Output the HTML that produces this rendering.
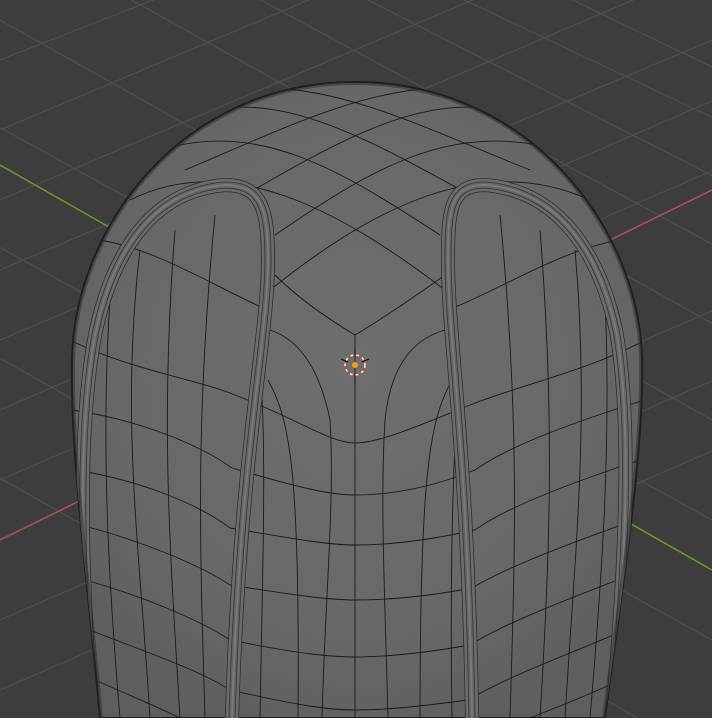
<!DOCTYPE html>
<html><head><style>html,body{margin:0;padding:0;background:#3d3d3d;width:712px;height:718px;overflow:hidden}svg{display:block}</style></head>
<body>
<svg width="712" height="718" viewBox="0 0 712 718" xmlns="http://www.w3.org/2000/svg">
<defs>
<clipPath id="obj"><path d="M100,718 C90,600 70,460 72,360 C74,230 180,82 355,82 C530,82 640,230 642,360 C644,460 620,600 605,718 Z"/></clipPath>
<radialGradient id="sh" cx="0.5" cy="0.45" r="0.6">
<stop offset="0" stop-color="#6e6e6e"/><stop offset="0.7" stop-color="#686868"/><stop offset="1" stop-color="#5e5e5e"/></radialGradient>
</defs>
<rect width="712" height="718" fill="#3d3d3d"/>
<g stroke="#4f4f4f" stroke-width="1.2">
<line x1="0" y1="20" x2="712" y2="420"/>
<line x1="60" y1="-40" x2="760" y2="350"/>
<line x1="150" y1="-60" x2="760" y2="270"/>
<line x1="270" y1="-50" x2="760" y2="200"/>
<line x1="380" y1="-40" x2="760" y2="140"/>
<line x1="510" y1="-30" x2="760" y2="90"/>
<line x1="-50" y1="100" x2="712" y2="520"/>
<line x1="-50" y1="220" x2="712" y2="640"/>
<line x1="-50" y1="330" x2="712" y2="760"/>
<line x1="-50" y1="450" x2="500" y2="760"/>
<line x1="0" y1="60" x2="230" y2="-30"/>
<line x1="0" y1="130" x2="380" y2="-30"/>
<line x1="0" y1="200" x2="520" y2="-20"/>
<line x1="0" y1="270" x2="680" y2="-20"/>
<line x1="0" y1="340" x2="760" y2="20"/>
<line x1="0" y1="410" x2="760" y2="80"/>
<line x1="0" y1="480" x2="760" y2="150"/>
<line x1="0" y1="620" x2="760" y2="290"/>
<line x1="0" y1="690" x2="760" y2="360"/>
<line x1="50" y1="740" x2="760" y2="430"/>
</g>
<line x1="0" y1="540" x2="712" y2="190" stroke="#b0505a" stroke-width="1.5"/>
<line x1="0" y1="165" x2="712" y2="570" stroke="#6f9a2a" stroke-width="1.5"/>
<path d="M100,718 C90,600 70,460 72,360 C74,230 180,82 355,82 C530,82 640,230 642,360 C644,460 620,600 605,718 Z" fill="url(#sh)" stroke="#1e1e1e" stroke-width="2"/>
<g clip-path="url(#obj)" fill="none">
<g stroke="#1a1a1a" stroke-width="0.9">
<path d="M130,200 C230,150 340,210 445,290"/>
<path d="M160,150 C260,120 340,170 440,235"/>
<path d="M210,110 C290,95 370,140 470,195"/>
<path d="M270,88 C350,90 430,130 530,170"/>
<path d="M590,200 C480,150 370,210 270,290"/>
<path d="M560,150 C450,120 370,170 275,235"/>
<path d="M500,110 C420,95 340,140 245,195"/>
<path d="M440,88 C360,90 280,130 185,170"/>
<path d="M275,275 C300,300 330,320 355,335 C380,320 410,300 445,275"/>
<path d="M355,335 L355,718"/>
<path d="M270,330 C300,340 320,370 330,420 C335,500 325,600 322,718"/>
<path d="M445,330 C410,340 390,370 385,420 C380,500 385,600 388,718"/>
<path d="M268,380 C290,420 300,470 298,718"/>
<path d="M452,380 C430,420 420,470 420,718"/>
<path d="M262,400 C266,470 262,600 260,718"/>
<path d="M458,400 C452,470 450,600 452,718"/>
<path d="M235,395 C300,420 330,443 355,443 C380,443 420,425 470,405"/>
<path d="M232,468 C300,488 330,495 355,495 C390,495 430,488 475,470"/>
<path d="M230,528 C300,540 330,545 355,545 C390,545 430,540 475,530"/>
<path d="M230,585 C300,596 330,600 355,600 C390,600 430,596 472,588"/>
<path d="M230,640 C300,654 330,657 355,657 C390,657 430,652 470,645"/>
<path d="M230,690 C300,706 330,710 355,710 C390,710 430,705 468,700"/>
<path d="M100,240 C160,250 220,290 268,310"/>
<path d="M70,340 C130,370 200,380 235,395"/>
<path d="M72,410 C140,420 200,445 232,468"/>
<path d="M75,470 C140,480 200,505 230,528"/>
<path d="M80,525 C140,540 200,565 230,585"/>
<path d="M85,580 C140,595 200,620 230,640"/>
<path d="M90,630 C140,650 200,670 230,690"/>
<path d="M95,680 C140,700 190,720 220,740"/>
<path d="M140,250 C120,420 140,550 150,718"/>
<path d="M175,230 C160,420 170,550 180,718"/>
<path d="M215,215 C195,420 200,550 205,718"/>
<path d="M110,300 C100,450 110,600 120,718"/>
<path d="M620,240 C560,250 500,290 448,310"/>
<path d="M645,340 C590,370 520,385 470,405"/>
<path d="M645,400 C580,420 510,445 475,470"/>
<path d="M640,460 C580,480 510,505 475,530"/>
<path d="M635,520 C580,540 510,565 472,588"/>
<path d="M630,575 C580,595 510,620 470,645"/>
<path d="M625,630 C580,650 510,675 468,700"/>
<path d="M620,680 C580,700 520,720 480,740"/>
<path d="M575,250 C590,420 575,550 565,718"/>
<path d="M540,230 C555,420 550,550 540,718"/>
<path d="M500,215 C520,420 515,550 510,718"/>
<path d="M605,300 C612,450 600,600 590,718"/>
</g>
<g>
<path id="gl" d="M92,718 C80,560 78,420 96,330 C116,240 160,190 225,185 C262,185 268,210 268,260 C268,340 240,450 232,718"/>
<path id="gr" d="M612,718 C626,560 632,420 616,330 C596,240 550,190 485,185 C450,185 448,210 448,260 C448,340 468,450 472,718"/>
</g>
<use href="#gl" stroke="#2a2a2a" stroke-width="14"/>
<use href="#gl" stroke="#6c6c6c" stroke-width="12.5"/>
<use href="#gl" stroke="#333" stroke-width="7"/>
<use href="#gl" stroke="#646464" stroke-width="5.5"/>
<use href="#gl" stroke="#7a7a7a" stroke-width="2"/>
<use href="#gr" stroke="#2a2a2a" stroke-width="14"/>
<use href="#gr" stroke="#6c6c6c" stroke-width="12.5"/>
<use href="#gr" stroke="#333" stroke-width="7"/>
<use href="#gr" stroke="#646464" stroke-width="5.5"/>
<use href="#gr" stroke="#7a7a7a" stroke-width="2"/>
<path d="M100,718 C90,600 70,460 72,360 C74,230 180,82 355,82 C530,82 640,230 642,360 C644,460 620,600 605,718" stroke="#2a2a2a" stroke-width="6" opacity="0.5"/>
</g>
<circle cx="355" cy="365" r="10" fill="none" stroke="#eee" stroke-width="1.5" stroke-dasharray="3 3"/>
<circle cx="355" cy="365" r="10" fill="none" stroke="#d33" stroke-width="1.5" stroke-dasharray="3 3" stroke-dashoffset="3"/>
<g stroke="#111" stroke-width="1"><line x1="341" y1="359" x2="348" y2="362"/><line x1="362" y1="362" x2="369" y2="359"/><line x1="355" y1="347" x2="355" y2="355"/><line x1="355" y1="375" x2="355" y2="383"/></g>
<circle cx="355" cy="365" r="3" fill="#f39a1c"/>
</svg>
</body></html>
